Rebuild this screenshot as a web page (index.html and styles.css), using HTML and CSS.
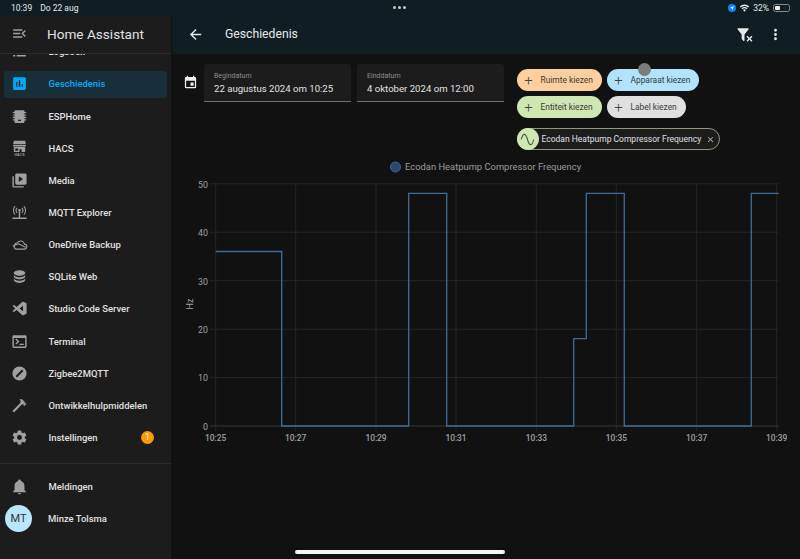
FILE: index.html
```html
<!DOCTYPE html>
<html lang="nl">
<head>
<meta charset="utf-8">
<title>Geschiedenis – Home Assistant</title>
<link rel="stylesheet" href="styles.css">
</head>
<body>
<div class="status">
  <div class="status-left"><span>10:39</span><span>Do 22 aug</span></div>
  <div class="status-dots"><i></i><i></i><i></i></div>
  <div class="status-right">
    <svg class="loc" viewBox="0 0 16 16"><circle cx="8" cy="8" r="8" fill="#0a84ff"/><path d="M12 4L4 7.6l3.5.9.9 3.5z" fill="#fff"/></svg>
    <svg class="wifi" viewBox="0 0 16 12"><path d="M8 11.5L5.8 9a3.2 3.2 0 0 1 4.4 0zM4.7 7.8L3.5 6.5a6.5 6.5 0 0 1 9 0l-1.2 1.3a4.8 4.8 0 0 0-6.6 0zM2.4 5.3L1 3.8a9.8 9.8 0 0 1 14 0l-1.4 1.5a8 8 0 0 0-11.2 0z" fill="#e8e8e8"/></svg>
    <span>32%</span>
    <div class="battery"><div class="battery-fill"></div></div>
  </div>
</div>
<div class="app">
  <aside class="sidebar">
    <div class="side-head">
      <svg class="icon" viewBox="0 0 24 24"><path d="M21,15.61L19.59,17L14.58,12L19.59,7L21,8.39L17.44,12L21,15.61M3,6H16V8H3V6M3,13V11H13V13H3M3,18V16H16V18H3Z"/></svg>
      <span class="app-title">Home Assistant</span>
    </div>
    <nav class="nav">
      <div class="nav-scroll">
        <div class="row"><svg class="icon" viewBox="0 0 24 24"><path d="M3 5h3v2H3zM8 5h13v2H8zM3 11h3v2H3zM8 11h13v2H8zM3 17h3v2H3zM8 17h13v2H8z"/></svg><span>Logboek</span></div>
        <div class="row active"><svg class="icon" viewBox="0 0 24 24"><path d="M19 3H5C3.9 3 3 3.9 3 5V19C3 20.1 3.9 21 5 21H19C20.1 21 21 20.1 21 19V5C21 3.9 20.1 3 19 3M9 17H7V10H9V17M13 17H11V7H13V17M17 17H15V13H17V17Z"/></svg><span>Geschiedenis</span></div>
        <div class="row"><svg class="icon" viewBox="0 0 24 24"><path d="M6 3h12a1 1 0 0 1 1 1v1.500h2.500V7H19v2h2.500v1.500H19v2h2.500V14H19v2h2.500v1.500H19V20a1 1 0 0 1-1 1H6a1 1 0 0 1-1-1v-2.500H2.500V16H5v-2H2.500v-1.500H5v-2H2.500V9H5V7H2.500V5.500H5V4a1 1 0 0 1 1-1zM10 16.500v2h4v-2z" fill-rule="evenodd"/></svg><span>ESPHome</span></div>
        <div class="row"><svg class="icon" viewBox="0 0 24 24"><path d="M4 1h16l1 5H3zM3 7h18v2H3zM4 10h16v7h-5v-4h-3v4H4zM6 12v3h4v-3z" fill-rule="evenodd"/><text x="12" y="23" class="hacs-text">HACS</text></svg><span>HACS</span></div>
        <div class="row"><svg class="icon" viewBox="0 0 24 24"><path d="M8 2h12a2 2 0 0 1 2 2v12a2 2 0 0 1-2 2H8a2 2 0 0 1-2-2V4a2 2 0 0 1 2-2zM11 6v8l6-4zM2 6h2v14h14v2H4a2 2 0 0 1-2-2z" fill-rule="evenodd"/></svg><span>Media</span></div>
        <div class="row"><svg class="icon" viewBox="0 0 24 24"><circle cx="12" cy="9" r="1.800" fill="currentColor"/><path class="line" d="M8.800 5.500a5 5 0 0 0 0 7M15.200 5.500a5 5 0 0 1 0 7M5.800 3a9 9 0 0 0 0 12M18.200 3a9 9 0 0 1 0 12"/><path d="M11 11h2v8h-2zM2 19h20v2H2z"/></svg><span>MQTT Explorer</span></div>
        <div class="row"><svg class="icon" viewBox="0 0 24 24"><path class="line" d="M6.500 18.500h12a3.500 3.500 0 0 0 .5-7 5.500 5.500 0 0 0-10-2 5 5 0 0 0-2.500 9zM2.500 14.500l8-3.500 10 5"/></svg><span>OneDrive Backup</span></div>
        <div class="row"><svg class="icon" viewBox="0 0 24 24"><path d="M12,3C7.58,3 4,4.79 4,7C4,9.21 7.58,11 12,11C16.42,11 20,9.21 20,7C20,4.79 16.42,3 12,3M4,9V12C4,14.21 7.58,16 12,16C16.42,16 20,14.21 20,12V9C20,11.21 16.42,13 12,13C7.58,13 4,11.21 4,9M4,14V17C4,19.21 7.58,21 12,21C16.42,21 20,19.21 20,17V14C20,16.21 16.42,18 12,18C7.58,18 4,16.21 4,14Z"/></svg><span>SQLite Web</span></div>
        <div class="row"><svg class="icon" viewBox="0 0 24 24"><path d="M16.500 2L22 4.500v15L16.500 22 8 14l-3.800 3L2 15.800 6 12 2 8.200 4.200 7 8 10zM17 8l-5 4 5 4z" fill-rule="evenodd"/></svg><span>Studio Code Server</span></div>
        <div class="row"><svg class="icon" viewBox="0 0 24 24"><path d="M4 3h16a2 2 0 0 1 2 2v14a2 2 0 0 1-2 2H4a2 2 0 0 1-2-2V5a2 2 0 0 1 2-2zM4 7v12h16V7zM6 9l1.400-1.400L12 12l-4.600 4.400L6 15l3-3zM12 15h6v2h-6z" fill-rule="evenodd"/></svg><span>Terminal</span></div>
        <div class="row"><svg class="icon" viewBox="0 0 24 24"><path d="M12 2a10 10 0 1 0 0 20 10 10 0 0 0 0-20zM15.500 6.500l2 2L8.500 17.500l-2-2z" fill-rule="evenodd"/></svg><span>Zigbee2MQTT</span></div>
        <div class="row"><svg class="icon" viewBox="0 0 24 24"><path d="M2 19.630L13.430 8.200L12.720 7.500L14.140 6.070L12 3.890C13.200 2.700 15.090 2.700 16.270 3.890L19.870 7.500L18.450 8.910H21.290L22 9.620L18.450 13.210L17.740 12.500V9.620L16.270 11.040L15.570 10.330L4.130 21.760L2 19.630Z"/></svg><span>Ontwikkelhulpmiddelen</span></div>
        <div class="row"><svg class="icon" viewBox="0 0 24 24"><path d="M12,15.5A3.5,3.5 0 0,1 8.5,12A3.5,3.5 0 0,1 12,8.5A3.5,3.5 0 0,1 15.5,12A3.5,3.5 0 0,1 12,15.5M19.43,12.97C19.47,12.65 19.5,12.33 19.5,12C19.5,11.67 19.47,11.34 19.43,11L21.54,9.37C21.73,9.22 21.78,8.95 21.66,8.73L19.66,5.27C19.54,5.05 19.27,4.96 19.05,5.05L16.56,6.05C16.04,5.66 15.5,5.32 14.87,5.07L14.5,2.42C14.46,2.18 14.25,2 14,2H10C9.75,2 9.54,2.18 9.5,2.42L9.13,5.07C8.5,5.32 7.96,5.66 7.44,6.05L4.95,5.05C4.73,4.96 4.46,5.05 4.34,5.27L2.34,8.73C2.21,8.95 2.27,9.22 2.46,9.37L4.57,11C4.53,11.34 4.5,11.67 4.5,12C4.5,12.33 4.53,12.65 4.57,12.97L2.46,14.63C2.27,14.78 2.21,15.05 2.34,15.27L4.34,18.73C4.46,18.95 4.73,19.03 4.95,18.95L7.44,17.94C7.96,18.34 8.5,18.68 9.13,18.93L9.5,21.58C9.54,21.82 9.75,22 10,22H14C14.25,22 14.46,21.82 14.5,21.58L14.87,18.93C15.5,18.67 16.04,18.34 16.56,17.94L19.05,18.95C19.27,19.03 19.54,18.95 19.66,18.73L21.66,15.27C21.78,15.05 21.73,14.78 21.54,14.63L19.43,12.97Z"/></svg><span>Instellingen</span><b class="badge">1</b></div>
      </div>
    </nav>
    <div class="side-foot">
      <div class="row"><svg class="icon" viewBox="0 0 24 24"><path d="M21,19V20H3V19L5,17V11C5,7.9 7.03,5.17 10,4.29C10,4.19 10,4.1 10,4A2,2 0 0,1 12,2A2,2 0 0,1 14,4C14,4.1 14,4.19 14,4.29C16.97,5.17 19,7.9 19,11V17L21,19M14,21A2,2 0 0,1 12,23A2,2 0 0,1 10,21"/></svg><span>Meldingen</span></div>
      <div class="row user"><div class="avatar">MT</div><span>Minze Tolsma</span></div>
    </div>
  </aside>
  <main class="main">
    <header class="top">
      <svg class="top-icon back" viewBox="0 0 24 24"><path d="M20,11V13H8L13.5,18.5L12.08,19.92L4.16,12L12.08,4.08L13.5,5.5L8,11H20Z"/></svg>
      <h1 class="page-title">Geschiedenis</h1>
      <svg class="top-icon filter" viewBox="0 0 24 24"><path d="M14.76,20.83L17.6,18L14.76,15.17L16.17,13.76L19,16.57L21.83,13.76L23.24,15.17L20.41,18L23.24,20.83L21.83,22.24L19,19.4L16.17,22.24L14.76,20.83M12,12V19.88C12.04,20.18 11.94,20.5 11.71,20.71C11.32,21.1 10.69,21.1 10.3,20.71L8.29,18.7C8.06,18.47 7.96,18.16 8,17.87V12H7.97L2.21,4.62C1.87,4.19 1.95,3.56 2.38,3.22C2.57,3.08 2.78,3 3,3V3H17V3C17.22,3 17.43,3.08 17.62,3.22C18.05,3.56 18.13,4.19 17.79,4.62L12.03,12H12Z"/></svg>
      <svg class="top-icon more" viewBox="0 0 24 24"><path d="M12,16A2,2 0 0,1 14,18A2,2 0 0,1 12,20A2,2 0 0,1 10,18A2,2 0 0,1 12,16M12,10A2,2 0 0,1 14,12A2,2 0 0,1 12,14A2,2 0 0,1 10,12A2,2 0 0,1 12,10M12,4A2,2 0 0,1 14,6A2,2 0 0,1 12,8A2,2 0 0,1 10,6A2,2 0 0,1 12,4Z"/></svg>
    </header>
    <section class="filters">
      <svg class="cal" viewBox="0 0 24 24"><path fill-rule="evenodd" d="M19,3H18V1H16V3H8V1H6V3H5C3.89,3 3,3.9 3,5V19A2,2 0 0,0 5,21H19A2,2 0 0,0 21,19V5A2,2 0 0,0 19,3M19,19H5V9H19V19M12,12H17V17H12V12Z"/></svg>
      <div class="dates">
        <div class="field"><label>Begindatum</label><div>22 augustus 2024 om 10:25</div></div>
        <div class="field"><label>Einddatum</label><div>4 oktober 2024 om 12:00</div></div>
      </div>
      <div class="targets">
        <div class="chip-rows">
          <div class="chip orange"><span class="plus">+</span>Ruimte kiezen</div>
          <div class="chip blue"><span class="plus">+</span>Apparaat kiezen</div>
          <div class="chip green"><span class="plus">+</span>Entiteit kiezen</div>
          <div class="chip grey"><span class="plus">+</span>Label kiezen</div>
        </div>
        <div class="selected">
          <span class="sel-icon"><svg viewBox="0 0 24 24"><path d="M2 12c2.500-11 7-11 10 0s7.500 11 10 0" fill="none" stroke="#4d5a40" stroke-width="1.800"/></svg></span>
          <span class="sel-text">Ecodan Heatpump Compressor Frequency</span>
          <svg class="sel-x" viewBox="0 0 24 24"><path d="M19,6.41L17.59,5L12,10.59L6.41,5L5,6.41L10.59,12L5,17.59L6.41,19L12,13.41L17.59,19L19,17.59L13.41,12L19,6.41Z"/></svg>
        </div>
      </div>
    </section>
    <svg class="chart" viewBox="172 155 628 400">
      <circle cx="395.500" cy="167" r="5" class="legend-dot"/>
      <text x="405" y="170" class="legend">Ecodan Heatpump Compressor Frequency</text>
      <path class="grid" d="M215.700 183.800V431M295.700 183.800V431M376 183.800V431M456 183.800V431M536.300 183.800V431M616.300 183.800V431M696.700 183.800V431M776.700 183.800V431M210 183.800H778.700M210 232.200H778.700M210 280.700H778.700M210 329.200H778.700M210 377.600H778.700"/>
      <path class="axis" d="M210 426H778.700"/>
      <path class="series" d="M215.700 251.500H281.700V426H408.700V193.300H446.700V426H573.700V338.700H586.300V193.300H624.300V426H751.300V193.300H778.700"/>
      <text x="208" y="187.500" class="ytick">50</text>
      <text x="208" y="236" class="ytick">40</text>
      <text x="208" y="284.500" class="ytick">30</text>
      <text x="208" y="333" class="ytick">20</text>
      <text x="208" y="381.300" class="ytick">10</text>
      <text x="208" y="429.700" class="ytick">0</text>
      <text x="215.700" y="441" class="xtick">10:25</text>
      <text x="295.700" y="441" class="xtick">10:27</text>
      <text x="376" y="441" class="xtick">10:29</text>
      <text x="456" y="441" class="xtick">10:31</text>
      <text x="536.300" y="441" class="xtick">10:33</text>
      <text x="616.300" y="441" class="xtick">10:35</text>
      <text x="696.700" y="441" class="xtick">10:37</text>
      <text x="776.700" y="441" class="xtick">10:39</text>
      <text x="0" y="0" class="unit" transform="translate(192.500 304) rotate(-90)">Hz</text>
    </svg>
  </main>
</div>
<div class="touch"></div>
<div class="home-bar"></div>
</body>
</html>
```
FILE: styles.css
```css
* { box-sizing: border-box; }
html, body { margin: 0; padding: 0; height: 100%; }
body {
  width: 800px; height: 559px; overflow: hidden; position: relative;
  background: #111111; color: #e1e1e1;
  font-family: Roboto, "Liberation Sans", sans-serif;
  display: flex; flex-direction: column;
}
.status {
  height: 16px; flex: none; background: #101e24; color: #e8e8e8;
  display: flex; align-items: center; justify-content: space-between;
  padding: 0 10px 0 11px; font-size: 8.500px; position: relative;
}
.status-left { display: flex; gap: 8px; }
.status-dots { position: absolute; left: 393px; top: 6px; display: flex; gap: 2px; }
.status-dots i { width: 3px; height: 3px; border-radius: 50%; background: #c8c8c8; display: block; }
.status-right { display: flex; align-items: center; gap: 3px; }
.loc { width: 8px; height: 8px; margin-right: -1px; }
.wifi { width: 11px; height: 8px; margin-left: 1px; }
.battery { width: 17px; height: 8px; border: 1px solid #8a8a8a; border-radius: 2.500px; padding: 1px; margin-left: 1px; }
.battery-fill { width: 5px; height: 100%; background: #f0f0f0; border-radius: 1px; }
.app { flex: 1; display: flex; min-height: 0; }
.sidebar {
  width: 172px; flex: none; background: #1c1c1c; border-right: 1px solid #111;
  display: flex; flex-direction: column;
}
.side-head {
  height: 38px; flex: none; display: flex; align-items: center;
  padding: 0 0 2px 10.500px; border-bottom: 1px solid #2c2c2c; gap: 19.500px;
}
.app-title { font-size: 13.600px; color: #e1e1e1; }
.icon { width: 17px; height: 17px; flex: none; fill: #a0a0a0; color: #a0a0a0; }
.line { fill: none; stroke: #a0a0a0; stroke-width: 1.500; }
.hacs-text { font: 700 5px "Liberation Sans", sans-serif; text-anchor: middle; }
.nav { height: 410px; flex: none; overflow: hidden; border-bottom: 1px solid #2c2c2c; }
.nav-scroll { margin-top: -18.300px; }
.row {
  height: 32.150px; display: flex; align-items: center; gap: 21px; padding-left: 10.500px;
  font-size: 9.450px; font-weight: 500; color: #e1e1e1; position: relative;
}
.row.active { color: #03a9f4; }
.row.active .icon { fill: #03a9f4; }
.row.active::before {
  content: ""; position: absolute; left: 4px; right: 4px; top: 3px; bottom: 2px;
  background: rgba(3, 169, 244, .13); border-radius: 3px;
}
.row > * { position: relative; }
.badge {
  position: absolute; left: 141px; top: 9.500px; width: 13px; height: 13px; border-radius: 50%;
  background: #ff9800; color: #fff; font-size: 8.500px; font-weight: 400;
  display: flex; align-items: center; justify-content: center;
}
.side-foot { padding-top: 6.500px; }
.row.user { padding-left: 5px; gap: 16px; }
.avatar {
  width: 27px; height: 27px; border-radius: 50%; background: #b9e6fe; color: #333;
  font-size: 11px; font-weight: 400; display: flex; align-items: center; justify-content: center;
}
.main { flex: 1; min-width: 0; display: flex; flex-direction: column; }
.top {
  height: 38px; flex: none; background: #101e24; display: flex; align-items: center;
  padding: 0 16px 2px 15px;
}
.top-icon { width: 17px; height: 17px; fill: #e8e8e8; flex: none; }
.page-title { font-size: 12.200px; font-weight: 400; margin: 0 0 0 21px; color: #e8e8e8; flex: 1; }
.filter { margin-right: 14px; }
.filters { height: 101px; flex: none; display: flex; align-items: flex-start; padding: 10px 0 0 11px; }
.cal { width: 15px; height: 15px; fill: #f0f0f0; margin: 11px 6px 0 0; flex: none; }
.dates { display: flex; gap: 5.500px; margin-left: -.500px; }
.field {
  width: 147.500px; height: 37.500px; background: #1c1c1c; border-bottom: 1px solid #6f6f6f;
  border-radius: 3px 3px 0 0; padding: 8px 0 0 10.500px; font-size: 9.600px; color: #e1e1e1;
}
.field label { display: block; font-size: 7px; color: #8f8f8f; line-height: 9px; margin-bottom: 1px; }
.field div { line-height: 13px; }
.targets { margin-left: 12.500px; padding-top: 5px; }
.chip-rows { display: grid; grid-template-columns: 85px auto; gap: 5px; justify-content: start; }
.chip {
  height: 22px; border-radius: 11px; display: flex; align-items: center; color: #3a3a3a;
  font-size: 8.400px; padding-right: 9px; white-space: nowrap;
}
.plus { width: 24px; text-align: center; font-size: 15px; font-weight: 300; color: #444; line-height: 20px; flex: none; }
.orange { background: #fdcf9f; }
.blue { background: #b2e3fd; }
.green { background: #cfe7b3; }
.grey { background: #e0e0e0; justify-self: start; }
.selected {
  margin-top: 10px; width: 203px; height: 22px; border-radius: 11px; border: 1px solid #8c9a78;
  background: #1c1c1c; display: flex; align-items: center; font-size: 8.500px; color: #e1e1e1; position: relative;
}
.sel-icon {
  width: 22px; height: 22px; margin: -1px 3px -1px -1px; border-radius: 50%; background: #cfe7b3;
  display: flex; align-items: center; justify-content: center; flex: none;
}
.sel-icon svg { width: 15px; height: 15px; }
.sel-text { white-space: nowrap; flex: 1; }
.sel-x { width: 9px; height: 9px; fill: #bdbdbd; margin-right: 4px; flex: none; }
.chart { width: 628px; height: 400px; display: block; flex: none; }
.legend-dot { fill: #2c4a68; stroke: #3f6a95; stroke-width: 1; }
.legend { font-size: 9.400px; fill: #9c9c9c; }
.grid { fill: none; stroke: #262626; stroke-width: 1; }
.axis { fill: none; stroke: #383838; stroke-width: 1; }
.series { fill: none; stroke: #3f6d99; stroke-width: 1.300; }
.ytick { font-size: 8.800px; fill: #a0a0a0; text-anchor: end; }
.xtick { font-size: 8.400px; fill: #a0a0a0; text-anchor: middle; font-weight: 500; }
.unit { font-size: 9px; fill: #a0a0a0; text-anchor: middle; }
.touch {
  position: absolute; left: 637.500px; top: 62.500px; width: 13px; height: 13px;
  border-radius: 50%; background: #7c7c7c;
}
.home-bar {
  position: absolute; left: 295px; top: 550px; width: 210px; height: 3.500px;
  border-radius: 2px; background: #f5f5f5;
}
```
